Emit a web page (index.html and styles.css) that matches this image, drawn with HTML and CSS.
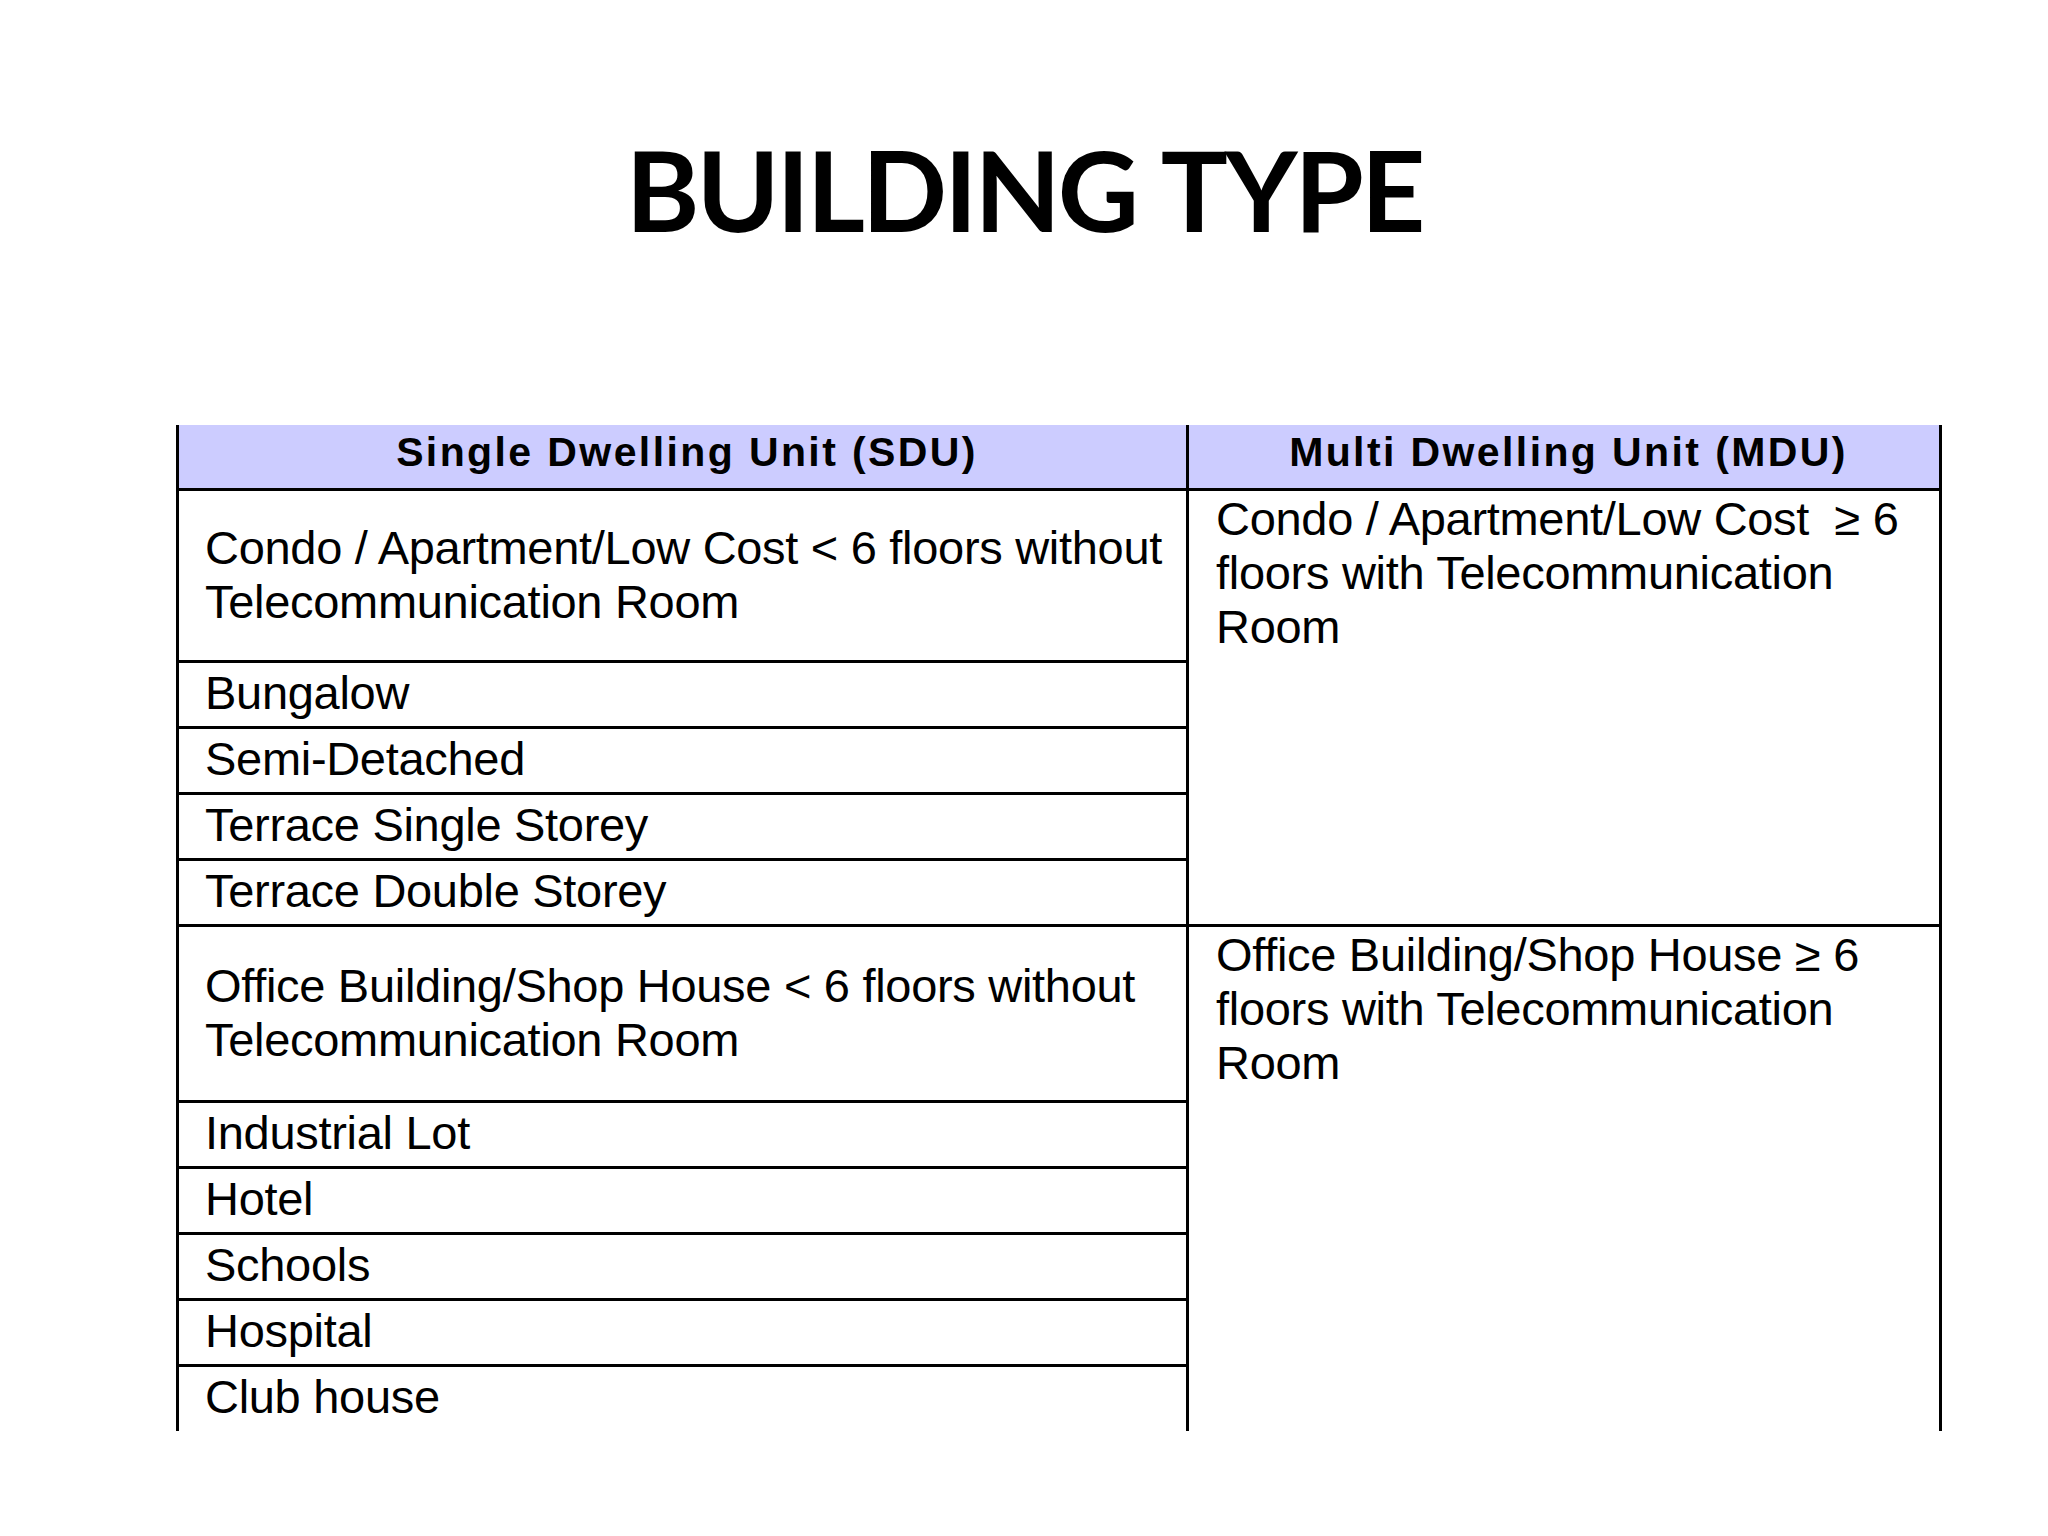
FILE: index.html
```html
<!DOCTYPE html>
<html lang="en">
<head>
<meta charset="utf-8">
<title>Building Type</title>
<link rel="stylesheet" href="styles.css">
</head>
<body>
<main class="slide">
  <h1 class="title">BUILDING TYPE</h1>
  <table class="types">
    <colgroup><col class="c-sdu"><col class="c-mdu"></colgroup>
    <thead>
      <tr class="r-head">
        <th class="sdu">Single Dwelling Unit (SDU)</th>
        <th class="mdu">Multi Dwelling Unit (MDU)</th>
      </tr>
    </thead>
    <tbody>
      <tr class="r-condo">
        <td class="sdu tall">Condo / Apartment/Low Cost &lt; 6 floors without<br>Telecommunication Room</td>
        <td class="mdu" rowspan="5">Condo / Apartment/Low Cost&nbsp; ≥ 6<br>floors with Telecommunication<br>Room</td>
      </tr>
      <tr class="r"><td class="sdu">Bungalow</td></tr>
      <tr class="r"><td class="sdu">Semi-Detached</td></tr>
      <tr class="r"><td class="sdu">Terrace Single Storey</td></tr>
      <tr class="r"><td class="sdu">Terrace Double Storey</td></tr>
      <tr class="r-office">
        <td class="sdu tall office">Office Building/Shop House &lt; 6 floors without<br>Telecommunication Room</td>
        <td class="mdu last" rowspan="6">Office Building/Shop House ≥ 6<br>floors with Telecommunication<br>Room</td>
      </tr>
      <tr class="r"><td class="sdu">Industrial Lot</td></tr>
      <tr class="r"><td class="sdu">Hotel</td></tr>
      <tr class="r"><td class="sdu">Schools</td></tr>
      <tr class="r"><td class="sdu">Hospital</td></tr>
      <tr class="r-last"><td class="sdu last">Club house</td></tr>
    </tbody>
  </table>
</main>
</body>
</html>
```

FILE: styles.css
```css
* { box-sizing: border-box; }

html, body {
  margin: 0;
  padding: 0;
  background: #ffffff;
}

.slide {
  width: 2048px;
  height: 1536px;
  overflow: hidden;
}

.title {
  margin: 133px 0 0 0;
  font-family: "Lato", "Open Sans", sans-serif;
  font-weight: 700;
  font-size: 112px;
  line-height: 112px;
  letter-spacing: -3px;
  word-spacing: 4px;
  text-align: center;
  color: #000;
}

.types {
  margin: 180px 0 0 176px;
  width: 1766px;
  table-layout: fixed;
  border-collapse: separate;
  border-spacing: 0;
  font-family: "Liberation Sans", Arial, sans-serif;
  color: #000;
}

.c-sdu { width: 1013px; }
.c-mdu { width: 753px; }

.types th,
.types td {
  padding: 0;
  vertical-align: top;
  border-bottom: 3px solid #000;
  border-right: 3px solid #000;
}

.types .sdu { border-left: 3px solid #000; }

.types th {
  background: #ccccff;
  font-weight: 700;
  font-size: 41px;
  line-height: 47px;
  letter-spacing: 2.4px;
  text-align: center;
  padding: 4px 0 0 9px;
}

.types td {
  font-size: 47px;
  line-height: 54px;
  letter-spacing: -0.3px;
  text-align: left;
}

.types td.sdu { padding: 3px 0 0 26px; }
.types td.sdu.tall { padding-top: 30px; }
.types td.sdu.office { padding-top: 32px; }
.types td.mdu { padding: 1px 0 0 27px; }
.types td.last { border-bottom: none; }

.r-head { height: 66px; }
.r-condo { height: 172px; }
.r { height: 66px; }
.r-office { height: 176px; }
.r-last { height: 64px; }
```
